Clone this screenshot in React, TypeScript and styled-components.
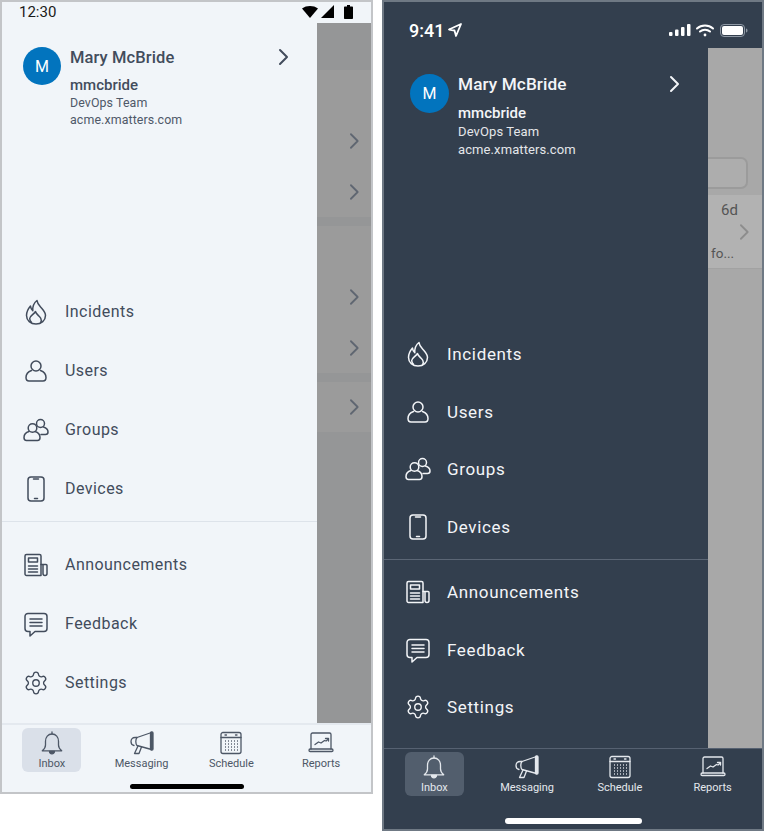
import React from 'react';
import styled, { createGlobalStyle } from 'styled-components';
import { Settings } from 'lucide-react';

const GlobalStyle = createGlobalStyle`
    html, body {
        margin: 0;
        padding: 0;
        background: #fff;
        font-family: Roboto, "Liberation Sans", sans-serif;
    }
`;

const Page = styled.div`
    display: flex;
    align-items: flex-start;
    gap: 9px;
    width: 764px;
    height: 831px;
    overflow: hidden;
`;

const Phone = styled.div<{ $dark?: boolean }>`
    box-sizing: border-box;
    display: flex;
    flex-direction: column;
    flex: none;
    width: ${p => (p.$dark ? '382px' : '373px')};
    height: ${p => (p.$dark ? '831px' : '794px')};
    border: 2px solid ${p => (p.$dark ? '#6f7984' : '#c3c5c8')};
    background: ${p => (p.$dark ? '#333f4e' : '#f1f5f9')};
    color: ${p => (p.$dark ? '#f3f5f8' : '#424c5c')};
`;

const StatusBar = styled.div<{ $dark?: boolean }>`
    box-sizing: border-box;
    display: flex;
    align-items: center;
    justify-content: space-between;
    flex: none;
    height: ${p => (p.$dark ? '46px' : '21px')};
    padding: ${p => (p.$dark ? '10px 14px 0 25px' : '0 18px 2px 17px')};
`;

const Clock = styled.div<{ $dark?: boolean }>`
    display: flex;
    align-items: center;
    gap: 4px;
    font-size: ${p => (p.$dark ? '18px' : '15px')};
    font-weight: ${p => (p.$dark ? 500 : 400)};
    color: ${p => (p.$dark ? '#fff' : '#1a1a1a')};
`;

const StatusIcons = styled.div`
    display: flex;
    align-items: center;
    gap: 5px;
`;

const Body = styled.div`
    display: flex;
    flex: 1;
    min-height: 0;
`;

const Drawer = styled.div<{ $dark?: boolean }>`
    display: flex;
    flex-direction: column;
    flex: none;
    width: ${p => (p.$dark ? '324px' : '315px')};
    padding-bottom: ${p => (p.$dark ? '12px' : '11px')};
    box-sizing: border-box;
`;

const Header = styled.div<{ $dark?: boolean }>`
    position: relative;
    display: flex;
    gap: 9px;
    padding: ${p => (p.$dark ? '26px 0 0 26px' : '24px 0 0 21px')};
`;

const Avatar = styled.div<{ $dark?: boolean }>`
    display: flex;
    align-items: center;
    justify-content: center;
    flex: none;
    width: ${p => (p.$dark ? '39px' : '38px')};
    height: ${p => (p.$dark ? '39px' : '38px')};
    border-radius: 50%;
    background: #0274be;
    color: #fff;
    font-size: 16px;
`;

const Profile = styled.div`
    display: flex;
    flex-direction: column;
`;

const Name = styled.div<{ $dark?: boolean }>`
    font-size: ${p => (p.$dark ? '17.2px' : '16.5px')};
    font-weight: 500;
    line-height: 21px;
    letter-spacing: 0.1px;
    margin-bottom: ${p => (p.$dark ? '9px' : '8px')};
`;

const Login = styled.div<{ $dark?: boolean }>`
    font-size: 15px;
    font-weight: 500;
    line-height: 18px;
    margin-bottom: ${p => (p.$dark ? '1px' : '0')};
`;

const Detail = styled.div<{ $dark?: boolean }>`
    font-size: ${p => (p.$dark ? '13px' : '12.4px')};
    line-height: ${p => (p.$dark ? '18px' : '17px')};
    letter-spacing: 0.1px;
    opacity: 0.92;
`;

const HeaderChevron = styled.svg<{ $dark?: boolean }>`
    position: absolute;
    top: ${p => (p.$dark ? '26px' : '24px')};
    right: 27px;
`;

const Menu = styled.div`
    display: flex;
    flex-direction: column;
    margin-top: auto;
`;

const MenuRow = styled.div<{ $dark?: boolean }>`
    display: flex;
    align-items: center;
    gap: 16px;
    height: ${p => (p.$dark ? '57.5px' : '59px')};
    padding-left: 21px;
    font-size: ${p => (p.$dark ? '17px' : '16px')};
    letter-spacing: ${p => (p.$dark ? '0.65px' : '0.45px')};
`;

const Divider = styled.div<{ $dark?: boolean }>`
    flex: none;
    height: 1px;
    margin: ${p => (p.$dark ? '3px 0 4px' : '3px 0 13px')};
    background: ${p => (p.$dark ? '#5b6675' : '#dde3ea')};
`;

const Scrim = styled.div<{ $dark?: boolean }>`
    display: flex;
    flex-direction: column;
    flex: 1;
    min-width: 0;
    background: ${p => (p.$dark ? '#a8a8a8' : '#959697')};
`;

const ScrimRow = styled.div<{ $height: number }>`
    display: flex;
    align-items: center;
    justify-content: flex-end;
    flex: none;
    height: ${p => p.$height}px;
    padding-right: 10px;
    background: #9b9b9b;
    color: #5f6671;
`;

const ScrimGap = styled.div<{ $height: number }>`
    flex: none;
    height: ${p => p.$height}px;
`;

const SearchField = styled.div`
    box-sizing: border-box;
    flex: none;
    width: 40px;
    height: 32px;
    margin: 109px 0 6px;
    border: 2px solid #9b9b9b;
    border-left: 0;
    border-radius: 0 7px 7px 0;
    background: #adadad;
`;

const ListItem = styled.div`
    box-sizing: border-box;
    display: flex;
    flex: none;
    height: 74px;
    background: #b2b2b2;
    border-bottom: 1px solid #a2a2a2;
    color: #555;
`;

const ItemText = styled.div`
    display: flex;
    flex-direction: column;
    justify-content: space-between;
    flex: none;
    width: 30px;
    padding: 7px 0;
    box-sizing: border-box;
`;

const Age = styled.div`
    font-size: 15px;
    line-height: 16px;
    text-align: right;
`;

const Snippet = styled.div`
    font-size: 13.5px;
    line-height: 16px;
    padding-left: 3px;
    white-space: nowrap;
`;

const ItemChevron = styled.div`
    display: flex;
    align-items: center;
    color: #8d8d8d;
`;

const TabBar = styled.div<{ $dark?: boolean }>`
    box-sizing: border-box;
    position: relative;
    display: grid;
    grid-template-columns: repeat(4, 1fr);
    align-content: start;
    flex: none;
    height: ${p => (p.$dark ? '81px' : '69px')};
    padding: ${p => (p.$dark ? '3px 3px 0 4px' : '3px 5px 0')};
    border-top: ${p => (p.$dark ? '1px solid #566171' : '2px solid #e4e9ef')};
`;

const Tab = styled.div<{ $active?: boolean; $dark?: boolean }>`
    box-sizing: border-box;
    display: flex;
    flex-direction: column;
    align-items: center;
    justify-self: center;
    width: 59px;
    height: 44px;
    padding-top: 3px;
    border-radius: 6px;
    white-space: nowrap;
    font-size: 11px;
    line-height: 13px;
    background: ${p => (!p.$active ? 'transparent' : p.$dark ? '#525e6d' : '#dae0e9')};
    color: ${p => (p.$dark ? '#e4e8ed' : '#4d5766')};
`;

const HomeBar = styled.div<{ $dark?: boolean }>`
    position: absolute;
    left: 50%;
    bottom: ${p => (p.$dark ? '5px' : '3px')};
    width: ${p => (p.$dark ? '137px' : '114px')};
    height: ${p => (p.$dark ? '6px' : '5px')};
    margin-left: ${p => (p.$dark ? '-68px' : '-57px')};
    border-radius: 3px;
    background: ${p => (p.$dark ? '#fff' : '#000')};
`;

const Chevron = ({ size = 18 }: { size?: number }) => (
    <svg width={size * 0.7} height={size} viewBox="0 0 10 16" fill="none" stroke="currentColor" strokeWidth="1.6" strokeLinecap="round" strokeLinejoin="round">
        <path d="M2 2l6 6-6 6" />
    </svg>
);

const NavIcon = ({ children }: { children: React.ReactNode }) => (
    <svg width="26" height="26" viewBox="0 0 26 26" fill="none" stroke="currentColor" strokeWidth="1.5" strokeLinecap="round" strokeLinejoin="round" style={{ flex: 'none' }}>
        {children}
    </svg>
);

const TabIcon = ({ children }: { children: React.ReactNode }) => (
    <svg width="26" height="24" viewBox="0 0 26 24" fill="none" stroke="currentColor" strokeWidth="1.3" strokeLinecap="round" strokeLinejoin="round" style={{ flex: 'none', marginBottom: 2 }}>
        {children}
    </svg>
);

const menuIcons: Record<string, React.ReactNode> = {
    Incidents: (
        <NavIcon>
            <path d="M14 1.500c.3 3.500 2.500 5.200 4.700 7.700 2.200 2.500 3.800 4.700 3.800 7.300 0 5-4.200 8.500-9.500 8.500s-9.500-3.500-9.500-8.500c0-3.600 1.600-6.700 4-9.500.2 2.200.8 3.500 2.300 4.800-.3-4.400.9-7.800 4.200-10.300z" />
            <path d="M8.500 23.300c-1.200-1-1.800-2.400-1.800-3.800 0-2.700 3.500-3.600 5.800-7 .6 2.200 2 3 3.700 4.800 1.300 1.300 2.100 2.800 2.100 4.200 0 .8-.3 1.500-.8 2" />
        </NavIcon>
    ),
    Users: (
        <NavIcon>
            <circle cx="13" cy="8" r="5" />
            <path d="M8.500 12.500c-3.200 1.200-5.500 3.700-5.500 7 0 2 1.200 3.500 3 3.500h14c1.800 0 3-1.500 3-3.500 0-3.300-2.300-5.800-5.500-7" />
        </NavIcon>
    ),
    Groups: (
        <NavIcon>
            <circle cx="17.500" cy="6.500" r="4" />
            <circle cx="9.500" cy="11" r="4.300" />
            <path d="M6 14.500c-3 .8-5 3.200-5 6 0 1.800 1 3 2.500 3h11c1.500 0 2.500-1.200 2.500-3 0-2.800-2-5.200-5-6" />
            <path d="M20.500 10c2.700.8 4.500 2.500 4.500 5 0 1.500-1 2.500-2.500 2.500H18" />
        </NavIcon>
    ),
    Devices: (
        <NavIcon>
            <rect x="5" y="1" width="16" height="24" rx="3" />
            <path d="M10.500 3h5M11.500 22.500h3" />
        </NavIcon>
    ),
    Announcements: (
        <NavIcon>
            <path d="M3.500 2.500h13c1 0 1.500.5 1.500 1.500v19.500H3.500c-.8 0-1.500-.7-1.500-1.500V4c0-1 .5-1.500 1.500-1.500z" />
            <path d="M18 12.500h5c.6 0 1 .4 1 1v8c0 1.100-.9 2-2 2s-2-.9-2-2v-9" />
            <path d="M5.500 6h9v4h-9zM5.500 14h9M5.500 17h9M5.500 20h9" />
        </NavIcon>
    ),
    Feedback: (
        <NavIcon>
            <path d="M5 2.500h16c1.600 0 3 1.200 3 3v12c0 1.700-1.400 3-3 3H12l-5 4.500v-4.500H5c-1.600 0-3-1.300-3-3v-12c0-1.800 1.400-3 3-3z" />
            <path d="M7 8h12M7 11.500h12M7 15h12" />
        </NavIcon>
    ),
    Settings: <Settings size={26} strokeWidth={1.25} style={{ flex: 'none' }} />,
};

const tabIcons: Record<string, React.ReactNode> = {
    Inbox: (
        <TabIcon>
            <path d="M13 3c-4 0-6.500 3.200-6.500 7.200v3.800c0 2.500-1 4-3.200 5.800h19.400c-2.200-1.800-3.200-3.300-3.200-5.800v-3.800C19.500 6.200 17 3 13 3z" />
            <path d="M13 1v2" />
            <path d="M10.500 20.300a2.500 2.500 0 0 0 5 0z" fill="currentColor" />
        </TabIcon>
    ),
    Messaging: (
        <TabIcon>
            <path d="M22.500 1.500L8 6.500H6C3.500 6.500 2 8.300 2 10.500c0 2.200 1.300 3.700 3 4" />
            <path d="M8 6.500c-1.600 2-1.600 6 0 8l14.500 4" />
            <path d="M9 15l-3.500 7.500H10l2.500-6.500" />
            <rect x="21.500" y="1" width="2.500" height="18" rx="1" fill="currentColor" />
        </TabIcon>
    ),
    Schedule: (
        <TabIcon>
            <rect x="3" y="1.500" width="20" height="21" rx="2" />
            <path d="M3 6.500h20M7 4h1.500M17.500 4H19" />
            <path
                d="M7 10h.9M10 10h.9M13 10h.9M16 10h.9M19 10h.9M7 13h.9M10 13h.9M13 13h.9M16 13h.9M19 13h.9M7 16h.9M10 16h.9M13 16h.9M16 16h.9M19 16h.9M7 19h.9M10 19h.9M13 19h.9M16 19h.9M19 19h.9"
                strokeWidth="1.600"
                strokeLinecap="butt"
            />
        </TabIcon>
    ),
    Reports: (
        <TabIcon>
            <path d="M3 18V3.500C3 2.700 3.700 2 4.500 2h17c.8 0 1.500.7 1.500 1.500V18" />
            <rect x="1" y="18" width="24" height="2.500" rx="1.200" />
            <path d="M7 13.500l3.500-2.500 2.500 1 3.500-2.500 1.500.5 2.500-2" />
            <path d="M17.500 7.500h3v2.500" />
        </TabIcon>
    ),
};

const topNav = ['Incidents', 'Users', 'Groups', 'Devices'];
const bottomNav = ['Announcements', 'Feedback', 'Settings'];
const tabs = ['Inbox', 'Messaging', 'Schedule', 'Reports'];

const AndroidStatus = () => (
    <StatusBar>
        <Clock>12:30</Clock>
        <StatusIcons>
            <svg width="16" height="12" viewBox="0 0 16 12">
                <path d="M0 2.500C4.500-.8 11.500-.8 16 2.500L8 12z" fill="#000" />
            </svg>
            <svg width="13" height="13" viewBox="0 0 13 13" style={{ marginLeft: -2 }}>
                <path d="M13 0v13H0z" fill="#000" />
            </svg>
            <svg width="9" height="14" viewBox="0 0 9 14" style={{ marginLeft: 5 }}>
                <path d="M3 0h3v1.500h2c.6 0 1 .4 1 1V13c0 .6-.4 1-1 1H1c-.6 0-1-.4-1-1V2.500c0-.6.4-1 1-1h2z" fill="#000" />
            </svg>
        </StatusIcons>
    </StatusBar>
);

const IosStatus = () => (
    <StatusBar $dark>
        <Clock $dark>
            9:41
            <svg width="14" height="14" viewBox="0 0 14 14" fill="none" stroke="#fff" strokeWidth="1.800" strokeLinejoin="round">
                <path d="M13 1L1 6.500l5.500 1L8 13z" />
            </svg>
        </Clock>
        <StatusIcons>
            <svg width="22" height="12" viewBox="0 0 22 12" fill="#fff">
                <rect x="0" y="8" width="3.500" height="4" rx="1" />
                <rect x="6" y="5.500" width="3.500" height="6.500" rx="1" />
                <rect x="12" y="3" width="3.500" height="9" rx="1" />
                <rect x="18" y="0" width="3.500" height="12" rx="1" />
            </svg>
            <svg width="18" height="13" viewBox="0 0 18 13" fill="none" stroke="#fff" strokeWidth="2" strokeLinecap="round">
                <path d="M1 4.500C5.500.5 12.500.5 17 4.500M4 7.500c2.800-2.400 7.200-2.400 10 0" />
                <circle cx="9" cy="11" r="1.400" fill="#fff" stroke="none" />
            </svg>
            <svg width="28" height="13" viewBox="0 0 28 13" style={{ marginLeft: 1 }}>
                <rect x=".5" y=".5" width="24" height="12" rx="3.500" fill="none" stroke="#8f99a5" />
                <rect x="2" y="2" width="21" height="9" rx="2" fill="#fff" />
                <path d="M26 4.500c1 .3 1.500 1 1.500 2s-.5 1.700-1.500 2z" fill="#8f99a5" />
            </svg>
        </StatusIcons>
    </StatusBar>
);

const DrawerPanel = ({ dark }: { dark?: boolean }) => (
    <Drawer $dark={dark}>
        <Header $dark={dark}>
            <Avatar $dark={dark}>M</Avatar>
            <Profile>
                <Name $dark={dark}>Mary McBride</Name>
                <Login $dark={dark}>mmcbride</Login>
                <Detail $dark={dark}>DevOps Team</Detail>
                <Detail $dark={dark}>acme.xmatters.com</Detail>
            </Profile>
            <HeaderChevron $dark={dark} width="12" height="20" viewBox="0 0 12 20" fill="none" stroke="currentColor" strokeWidth="2" strokeLinecap="round" strokeLinejoin="round">
                <path d="M2 3l7 7-7 7" />
            </HeaderChevron>
        </Header>
        <Menu>
            {topNav.map(label => (
                <MenuRow key={label} $dark={dark}>
                    {menuIcons[label]}
                    {label}
                </MenuRow>
            ))}
            <Divider $dark={dark} />
            {bottomNav.map(label => (
                <MenuRow key={label} $dark={dark}>
                    {menuIcons[label]}
                    {label}
                </MenuRow>
            ))}
        </Menu>
    </Drawer>
);

const Tabs = ({ dark }: { dark?: boolean }) => (
    <TabBar $dark={dark}>
        {tabs.map((label, i) => (
            <Tab key={label} $dark={dark} $active={i === 0}>
                {tabIcons[label]}
                {label}
            </Tab>
        ))}
        <HomeBar $dark={dark} />
    </TabBar>
);

export default function App() {
    return (
        <>
            <GlobalStyle />
            <Page>
                <Phone>
                    <AndroidStatus />
                    <Body>
                        <DrawerPanel />
                        <Scrim>
                            <ScrimGap $height={47} />
                            <ScrimRow $height={46} />
                            <ScrimRow $height={50}><Chevron /></ScrimRow>
                            <ScrimRow $height={51}><Chevron /></ScrimRow>
                            <ScrimGap $height={9} />
                            <ScrimRow $height={46} />
                            <ScrimRow $height={50}><Chevron /></ScrimRow>
                            <ScrimRow $height={51}><Chevron /></ScrimRow>
                            <ScrimGap $height={9} />
                            <ScrimRow $height={50}><Chevron /></ScrimRow>
                        </Scrim>
                    </Body>
                    <Tabs />
                </Phone>
                <Phone $dark>
                    <IosStatus />
                    <Body>
                        <DrawerPanel dark />
                        <Scrim $dark>
                            <SearchField />
                            <ListItem>
                                <ItemText>
                                    <Age>6d</Age>
                                    <Snippet>fo...</Snippet>
                                </ItemText>
                                <ItemChevron><Chevron /></ItemChevron>
                            </ListItem>
                        </Scrim>
                    </Body>
                    <Tabs dark />
                </Phone>
            </Page>
        </>
    );
}
